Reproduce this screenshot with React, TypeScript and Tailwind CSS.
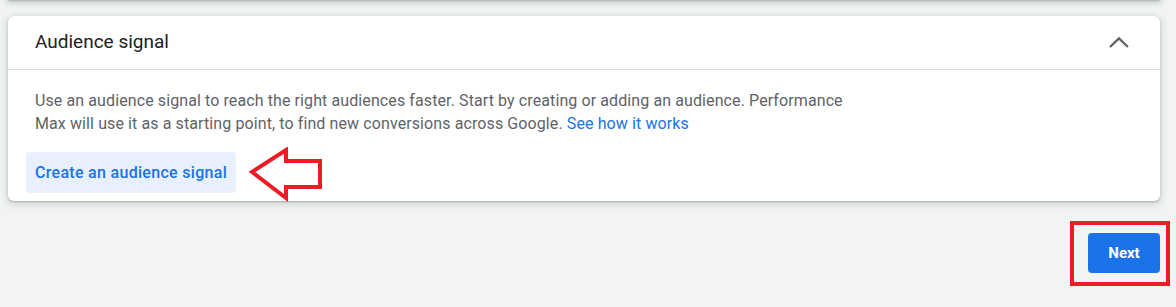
import React from "react";

function ChevronUp() {
  return (
    <svg width="24" height="24" viewBox="0 0 24 24" className="text-[#5f6368]">
      <polyline points="3,16 12,7.5 21,16" fill="none" stroke="currentColor" strokeWidth="2.4" />
    </svg>
  );
}

function RedArrow() {
  return (
    <svg width="76" height="56" viewBox="0 0 76 56" className="absolute left-[239px] top-[77px]">
      <polygon
        points="5,25 39,3 39,14 73,14 73,40 39,40 39,51"
        fill="none"
        stroke="#ed1c24"
        strokeWidth="4"
        strokeLinejoin="miter"
      />
    </svg>
  );
}

export default function App() {
  return (
    <div className="h-[307px] w-[1176px] overflow-hidden bg-[#f1f3f4] font-['Roboto',sans-serif]">
      <div className="mx-2 -mt-[40px] h-[40px] w-[1152px] bg-white shadow-[0_1px_2px_rgba(60,64,67,0.3),0_2px_6px_2px_rgba(60,64,67,0.15)]" />
      <div className="mx-2 mt-4 w-[1152px] rounded-md bg-white shadow-[0_1px_2px_rgba(60,64,67,0.3),0_2px_6px_2px_rgba(60,64,67,0.15)]">
        <div className="flex h-[54px] items-center justify-between border-b border-[#dadce0] pl-[27px] pr-[29px]">
          <h2 className="text-[19px] text-[#202124]">Audience signal</h2>
          <ChevronUp />
        </div>
        <div className="relative px-[18px] pb-2 pt-[19px]">
          <p className="px-[9px] text-[16px] leading-[23px] tracking-[0.1px] text-[#5f6368]">
            Use an audience signal to reach the right audiences faster. Start by creating or adding an audience. Performance
            <br />
            Max will use it as a starting point, to find new conversions across Google.{" "}
            <span className="text-[#1a73e8]">See how it works</span>
          </p>
          <button className="mt-[17px] h-[41px] rounded bg-[#e8f0fe] px-[9px] text-[16px] font-medium tracking-[0.3px] text-[#1a73e8]">
            Create an audience signal
          </button>
          <RedArrow />
        </div>
      </div>
      <div className="mr-[6px] mt-5 flex justify-end">
        <div className="border-4 border-[#ed1c24] pb-[9px] pl-[14px] pr-[6px] pt-[8px]">
          <button className="h-10 w-[72px] rounded bg-[#1a73e8] text-[15px] font-bold text-white">Next</button>
        </div>
      </div>
    </div>
  );
}
